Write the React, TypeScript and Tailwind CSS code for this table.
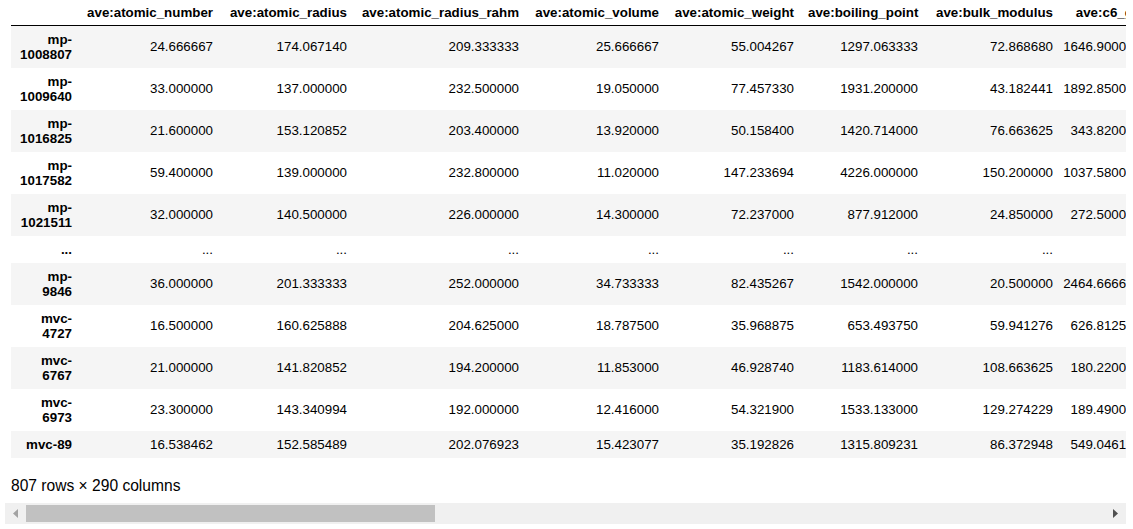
const columns = [
  { name: 'ave:atomic_number', width: 'w-[141px]' },
  { name: 'ave:atomic_radius', width: 'w-[134px]' },
  { name: 'ave:atomic_radius_rahm', width: 'w-[172px]' },
  { name: 'ave:atomic_volume', width: 'w-[140px]' },
  { name: 'ave:atomic_weight', width: 'w-[135px]' },
  { name: 'ave:boiling_point', width: 'w-[124px]' },
  { name: 'ave:bulk_modulus', width: 'w-[135px]' },
  { name: 'ave:c6_gb', width: 'w-[88px]' },
  { name: 'ave:covalent_radius_cordero', width: 'w-[190px]' },
  { name: 'ave:covalent_radius_pyykko', width: 'w-[180px]' },
]

type Row = { id: [string, string?]; values: string[] } | 'ellipsis'

const rows: Row[] = [
  { id: ['mp-', '1008807'], values: ['24.666667', '174.067140', '209.333333', '25.666667', '55.004267', '1297.063333', '72.868680', '1646.900000', '136.333333', '128.666667'] },
  { id: ['mp-', '1009640'], values: ['33.000000', '137.000000', '232.500000', '19.050000', '77.457330', '1931.200000', '43.182441', '1892.850000', '121.500000', '119.000000'] },
  { id: ['mp-', '1016825'], values: ['21.600000', '153.120852', '203.400000', '13.920000', '50.158400', '1420.714000', '76.663625', '343.820000', '118.600000', '113.400000'] },
  { id: ['mp-', '1017582'], values: ['59.400000', '139.000000', '232.800000', '11.020000', '147.233694', '4226.000000', '150.200000', '1037.580000', '158.400000', '146.600000'] },
  { id: ['mp-', '1021511'], values: ['32.000000', '140.500000', '226.000000', '14.300000', '72.237000', '877.912000', '24.850000', '272.500000', '120.000000', '117.500000'] },
  'ellipsis',
  { id: ['mp-', '9846'], values: ['36.000000', '201.333333', '252.000000', '34.733333', '82.435267', '1542.000000', '20.500000', '2464.666667', '154.000000', '145.666667'] },
  { id: ['mvc-', '4727'], values: ['16.500000', '160.625888', '204.625000', '18.787500', '35.968875', '653.493750', '59.941276', '626.812500', '106.375000', '101.875000'] },
  { id: ['mvc-', '6767'], values: ['21.000000', '141.820852', '194.200000', '11.853000', '46.928740', '1183.614000', '108.663625', '180.220000', '104.800000', '99.400000'] },
  { id: ['mvc-', '6973'], values: ['23.300000', '143.340994', '192.000000', '12.416000', '54.321900', '1533.133000', '129.274229', '189.490000', '103.700000', '98.600000'] },
  { id: ['mvc-89'], values: ['16.538462', '152.585489', '202.076923', '15.423077', '35.192826', '1315.809231', '86.372948', '549.046154', '108.846154', '103.538462'] },
]

function ScrollArrow({ dir }: { dir: 'left' | 'right' }) {
  return (
    <div className="flex h-full w-[21px] shrink-0 items-center justify-center">
      <svg width="5" height="9" viewBox="0 0 5 9">
        {dir === 'left' ? (
          <polygon points="5,0 0,4.5 5,9" fill="#a3a3a3" />
        ) : (
          <polygon points="0,0 5,4.5 0,9" fill="#505050" />
        )}
      </svg>
    </div>
  )
}

export default function App() {
  return (
    <div className="h-[529px] w-[1133px] overflow-hidden bg-white font-['Liberation_Sans',Arial,sans-serif] text-black">
      <div className="ml-[5px] w-[1121px]">
        {/* DataFrame table, clipped by the scroll container */}
        <div className="overflow-hidden pl-[6px]">
          <table className="w-[1507px] table-fixed border-collapse text-[13.33px] leading-[15px]">
            <colgroup>
              <col className="w-[68px]" />
              {columns.map((c) => (
                <col key={c.name} className={c.width} />
              ))}
            </colgroup>
            <thead>
              <tr className="border-b border-black">
                <th className="h-[25px] px-[7px] py-0" />
                {columns.map((c) => (
                  <th
                    key={c.name}
                    className="h-[25px] whitespace-nowrap px-[7px] py-0 text-right align-middle font-bold"
                  >
                    {c.name}
                  </th>
                ))}
              </tr>
            </thead>
            <tbody>
              {rows.map((row, i) => {
                const bg = i % 2 === 0 ? 'bg-[#f5f5f5]' : 'bg-white'
                if (row === 'ellipsis') {
                  return (
                    <tr key="ellipsis" className={bg}>
                      <th className="py-[6px] pr-[7px] text-right align-middle font-bold">...</th>
                      {columns.map((c) => (
                        <td key={c.name} className="whitespace-nowrap py-[6px] pr-[7px] text-right align-middle">
                          ...
                        </td>
                      ))}
                    </tr>
                  )
                }
                return (
                  <tr key={row.id.join('')} className={bg}>
                    <th className="whitespace-nowrap py-[6px] pl-0 pr-[7px] text-right align-middle font-bold">
                      {row.id[0]}
                      {row.id[1] && (
                        <>
                          <br />
                          {row.id[1]}
                        </>
                      )}
                    </th>
                    {row.values.map((v, j) => (
                      <td key={j} className="whitespace-nowrap py-[6px] pr-[7px] text-right align-middle">
                        {v}
                      </td>
                    ))}
                  </tr>
                )
              })}
            </tbody>
          </table>
        </div>

        <p className="mt-[19px] h-[18px] pl-[6px] text-[15.6px] leading-[18px]">807 rows × 290 columns</p>

        {/* Horizontal scrollbar */}
        <div className="mt-[8px] flex h-[21px] items-center bg-[#f0f0f0]">
          <ScrollArrow dir="left" />
          <div className="h-[17px] w-[409px] bg-[#c1c1c1]" />
          <div className="flex-1" />
          <ScrollArrow dir="right" />
        </div>
      </div>
    </div>
  )
}
